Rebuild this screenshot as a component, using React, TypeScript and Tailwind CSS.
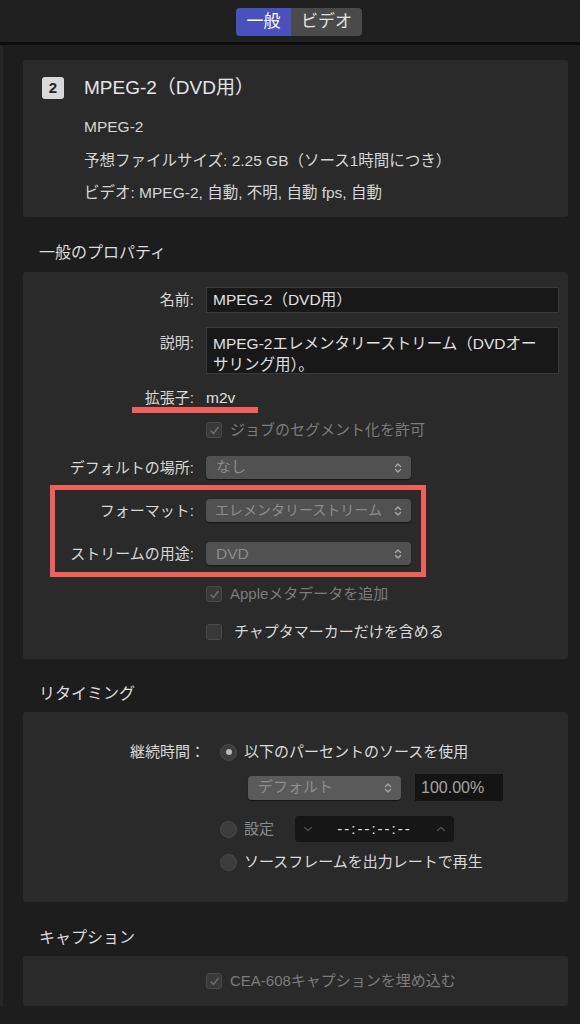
import React from "react";

function UpDown({ color = "#a8a8a8" }: { color?: string }) {
  return (
    <svg width="8" height="12" viewBox="0 0 8 12" fill="none" stroke={color} strokeWidth="1.4" strokeLinecap="round" strokeLinejoin="round">
      <path d="M1.5 4.5 L4 2 L6.5 4.5" />
      <path d="M1.5 7.5 L4 10 L6.5 7.5" />
    </svg>
  );
}

function Checkbox({ checked = false, disabled = false }: { checked?: boolean; disabled?: boolean }) {
  return (
    <div className="flex h-[16px] w-[16px] shrink-0 items-center justify-center rounded-[3px] border border-[#4a4a4a] bg-[#393939]">
      {checked && (
        <svg width="11" height="11" viewBox="0 0 11 11" fill="none" stroke={disabled ? "#6c6c6c" : "#cfcfcf"} strokeWidth="1.6" strokeLinecap="round" strokeLinejoin="round">
          <path d="M2 6 L4.5 8.5 L9 2.5" />
        </svg>
      )}
    </div>
  );
}

function Radio({ on = false }: { on?: boolean }) {
  return (
    <div className="flex h-[17px] w-[17px] shrink-0 items-center justify-center rounded-full border border-[#4a4a4a] bg-[#3c3c3c]">
      {on && <div className="h-[6px] w-[6px] rounded-full bg-[#b8b8b8]" />}
    </div>
  );
}

function Label({ children }: { children: React.ReactNode }) {
  return <div className="w-[171px] shrink-0 text-right text-[15px] leading-[20px] text-[#d8d8d8]">{children}</div>;
}

export default function App() {
  return (
    <div className="flex h-[1024px] w-[580px] flex-col overflow-hidden bg-[#1d1d1d] font-['Liberation_Sans','Noto_Sans_CJK_JP',sans-serif]">
      {/* top bar */}
      <div className="flex h-[45px] shrink-0 items-start justify-center border-b-[3px] border-[#0d0d0d] bg-[#202020] pl-[18px] pt-[8px]">
        <div className="flex h-[28px] overflow-hidden rounded-[4px] text-[17px] leading-[28px]">
          <div className="w-[55px] bg-[#4b50bf] text-center text-white">一般</div>
          <div className="w-[71px] bg-[#4a4a4a] text-center text-[#e0e0e0]">ビデオ</div>
        </div>
      </div>

      <div className="flex flex-col border-l-[3px] border-[#262626] pl-[20px] pr-[12px] pt-[15px]">
        {/* panel 1 */}
        <div className="rounded-[3px] bg-[#2a2a2a] pb-[14px] pl-[19px] pt-[17px]">
          <div className="flex h-[22px] items-center">
            <div className="flex h-[22px] w-[22px] items-center justify-center rounded-[3px] bg-[#d9d9d9] text-[15px] font-bold text-[#222]">2</div>
            <div className="ml-[20px] text-[19px] leading-[22px] text-[#e6e6e6]">MPEG-2（DVD用）</div>
          </div>
          <div className="mt-[18px] pl-[42px] text-[15.5px] leading-[20px] text-[#d6d6d6]">MPEG-2</div>
          <div className="mt-[14px] pl-[42px] text-[15.5px] leading-[20px] text-[#d6d6d6]">予想ファイルサイズ: 2.25 GB（ソース1時間につき）</div>
          <div className="mt-[12px] pl-[42px] text-[15.5px] leading-[20px] text-[#d6d6d6]">ビデオ: MPEG-2, 自動, 不明, 自動 fps, 自動</div>
        </div>

        <div className="mb-[9px] mt-[26px] pl-[16px] text-[16px] leading-[20px] text-[#dcdcdc]">一般のプロパティ</div>

        {/* panel 2 */}
        <div className="relative rounded-[3px] bg-[#2a2a2a] pb-[17px] pt-[15px]">
          <div className="flex h-[26px] items-center gap-[12px]">
            <Label>名前:</Label>
            <div className="flex h-[26px] w-[353px] items-center border border-[#3b3b3b] bg-[#181818] pl-[6px] text-[15.5px] text-[#e0e0e0]">MPEG-2（DVD用）</div>
          </div>
          <div className="mt-[14px] flex items-start gap-[12px]">
            <div className="mt-[6px]">
              <Label>説明:</Label>
            </div>
            <div className="h-[47px] w-[353px] overflow-hidden border border-[#3b3b3b] bg-[#181818] pl-[6px] pt-[5px] text-[15.5px] leading-[21px] text-[#e0e0e0]">
              MPEG-2エレメンタリーストリーム（DVDオー
              <br />
              サリング用）。
            </div>
          </div>
          <div className="mt-[14px] flex h-[20px] items-center gap-[12px]">
            <Label>拡張子:</Label>
            <div className="text-[15.5px] text-[#e0e0e0]">m2v</div>
          </div>
          <div className="mt-[12px] flex h-[20px] items-center gap-[8px] pl-[183px]">
            <Checkbox checked disabled />
            <div className="text-[15px] text-[#7c7c7c]">ジョブのセグメント化を許可</div>
          </div>
          <div className="mt-[16px] flex h-[23px] items-center gap-[12px]">
            <Label>デフォルトの場所:</Label>
            <div className="flex h-[23px] w-[205px] items-center justify-between rounded-[4px] bg-[#515151] pl-[10px] pr-[9px] text-[15px] text-[#8c8c8c] shadow-[0_1px_1px_rgba(0,0,0,0.5)]">
              <span>なし</span>
              <UpDown />
            </div>
          </div>
          <div className="mt-[20px] flex h-[23px] items-center gap-[12px]">
            <Label>フォーマット:</Label>
            <div className="flex h-[23px] w-[205px] items-center justify-between rounded-[4px] bg-[#515151] pl-[9px] pr-[9px] text-[14px] text-[#8c8c8c] shadow-[0_1px_1px_rgba(0,0,0,0.5)]">
              <span className="whitespace-nowrap">エレメンタリーストリーム</span>
              <UpDown />
            </div>
          </div>
          <div className="mt-[20px] flex h-[23px] items-center gap-[12px]">
            <Label>ストリームの用途:</Label>
            <div className="flex h-[23px] w-[205px] items-center justify-between rounded-[4px] bg-[#515151] pl-[10px] pr-[9px] text-[15.5px] text-[#8c8c8c] shadow-[0_1px_1px_rgba(0,0,0,0.5)]">
              <span>DVD</span>
              <UpDown />
            </div>
          </div>
          <div className="mt-[19px] flex h-[20px] items-center gap-[8px] pl-[183px]">
            <Checkbox checked disabled />
            <div className="text-[15px] text-[#7c7c7c]">Appleメタデータを追加</div>
          </div>
          <div className="mt-[18px] flex h-[20px] items-center gap-[12px] pl-[183px]">
            <Checkbox />
            <div className="text-[15px] text-[#dadada]">チャプタマーカーだけを含める</div>
          </div>

          {/* annotations */}
          <div className="pointer-events-none absolute left-[109px] top-[135px] h-[6px] w-[126px] bg-[#f0605a]" />
          <div className="pointer-events-none absolute left-[27px] top-[213px] h-[92px] w-[376px] border-[5px] border-[#f0605a]" />
        </div>

        <div className="mb-[8px] mt-[25px] pl-[16px] text-[16px] leading-[20px] text-[#dcdcdc]">リタイミング</div>

        {/* panel 3 */}
        <div className="rounded-[3px] bg-[#2a2a2a] pb-[30px] pt-[30px]">
          <div className="flex h-[20px] items-center">
            <div className="w-[182px] shrink-0 text-right text-[15px] text-[#d8d8d8]">継続時間：</div>
            <div className="ml-[15px] flex items-center gap-[7px]">
              <Radio on />
              <span className="text-[15px] text-[#dadada]">以下のパーセントのソースを使用</span>
            </div>
          </div>
          <div className="mt-[12px] flex h-[27px] items-center gap-[14px] pl-[225px]">
            <div className="flex h-[24px] w-[153px] items-center justify-between rounded-[4px] bg-[#5a5a5a] pl-[10px] pr-[9px] text-[15px] text-[#8e8e8e] shadow-[0_1px_1px_rgba(0,0,0,0.5)]">
              <span>デフォルト</span>
              <UpDown />
            </div>
            <div className="flex h-[27px] w-[88px] items-center bg-[#141414] pl-[6px] text-[16px] text-[#a4a4a4]">100.00%</div>
          </div>
          <div className="mt-[15px] flex h-[26px] items-center pl-[197px]">
            <div className="flex w-[75px] items-center gap-[7px]">
              <Radio />
              <span className="text-[15px] text-[#8a8a8a]">設定</span>
            </div>
            <div className="flex h-[26px] w-[159px] items-center justify-between rounded-[4px] bg-[#161616] px-[8px]">
              <svg width="10" height="6" viewBox="0 0 10 6" fill="none" stroke="#505050" strokeWidth="1.4" strokeLinecap="round" strokeLinejoin="round">
                <path d="M1.5 1.5 L5 4.5 L8.5 1.5" />
              </svg>
              <span className="text-[15px] tracking-[2px] text-[#e2e2e2]">--:--:--:--</span>
              <svg width="10" height="6" viewBox="0 0 10 6" fill="none" stroke="#505050" strokeWidth="1.4" strokeLinecap="round" strokeLinejoin="round">
                <path d="M1.5 4.5 L5 1.5 L8.5 4.5" />
              </svg>
            </div>
          </div>
          <div className="mt-[10px] flex h-[20px] items-center gap-[7px] pl-[197px]">
            <Radio />
            <span className="text-[15px] text-[#dadada]">ソースフレームを出力レートで再生</span>
          </div>
        </div>

        <div className="mb-[8px] mt-[26px] pl-[16px] text-[16px] leading-[20px] text-[#dcdcdc]">キャプション</div>

        {/* panel 4 */}
        <div className="rounded-[3px] bg-[#2a2a2a] pb-[15px] pt-[15px]">
          <div className="flex h-[20px] items-center gap-[8px] pl-[183px]">
            <Checkbox checked disabled />
            <span className="text-[15px] text-[#7c7c7c]">CEA-608キャプションを埋め込む</span>
          </div>
        </div>
      </div>
    </div>
  );
}
